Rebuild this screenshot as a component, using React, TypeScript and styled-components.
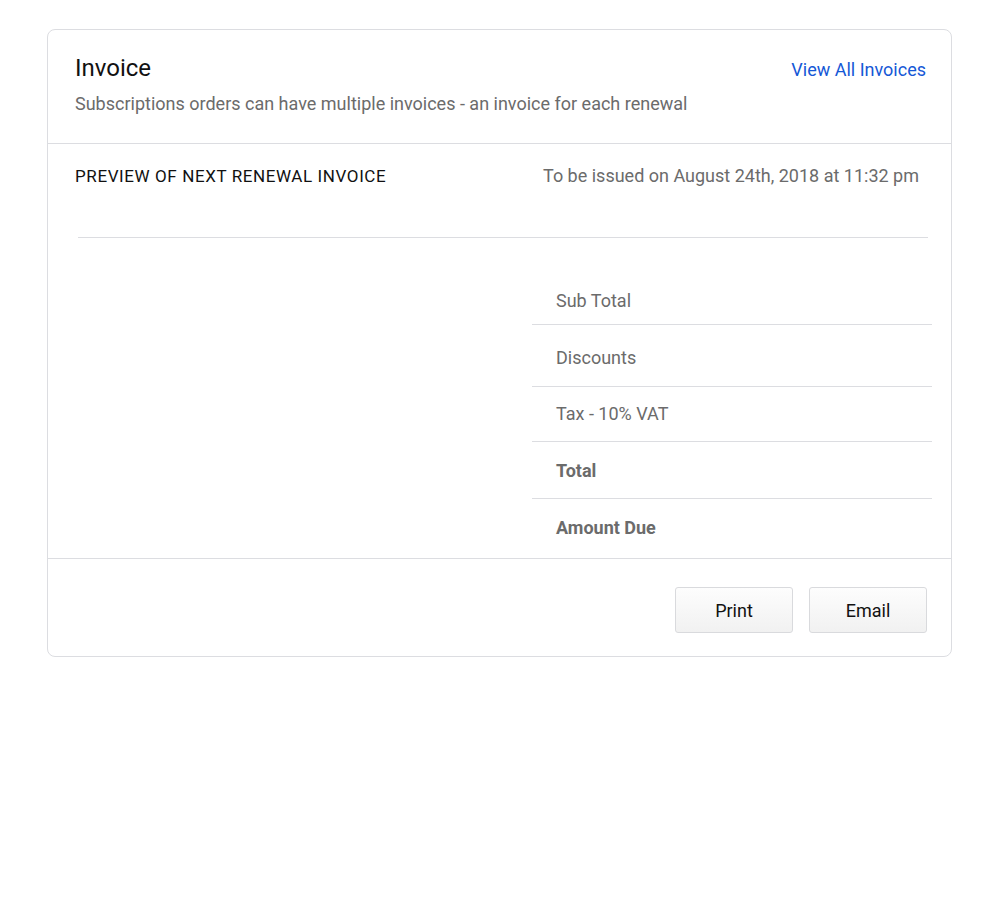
import { createGlobalStyle, styled } from 'styled-components'

const GlobalStyle = createGlobalStyle`
  body {
    margin: 0;
    background: #ffffff;
    font-family: Roboto, "Liberation Sans", Arial, sans-serif;
  }
  * {
    box-sizing: border-box;
  }
`

const Page = styled.div`
  padding: 29px 48px 0 47px;
`

const Card = styled.div`
  border: 1px solid #dcdde1;
  border-radius: 8px;
  background: #fff;
`

const Header = styled.div`
  display: flex;
  justify-content: space-between;
  align-items: flex-start;
  padding: 24px 25px 29px 27px;
  border-bottom: 1px solid #dcdde1;
`

const Title = styled.h1`
  margin: 0 0 11px;
  font-size: 24px;
  font-weight: 400;
  line-height: 28px;
  color: #111;
`

const Subtitle = styled.p`
  margin: 0;
  font-size: 18px;
  line-height: 21px;
  color: #6b6b6b;
`

const Link = styled.a`
  margin-top: 5px;
  font-size: 18px;
  line-height: 21px;
  color: #1558d6;
  text-decoration: none;
  cursor: pointer;
`

const PreviewRow = styled.div`
  display: flex;
  justify-content: space-between;
  padding: 21px 32px 50px 27px;
`

const PreviewLabel = styled.div`
  font-size: 17px;
  line-height: 22px;
  letter-spacing: 0.6px;
  color: #111;
`

const IssuedOn = styled.div`
  font-size: 18px;
  line-height: 22px;
  color: #6b6b6b;
`

const Divider = styled.hr`
  margin: 0 23px 0 30px;
  border: none;
  border-top: 1px solid #dcdde1;
`

const Totals = styled.div`
  display: flex;
  justify-content: flex-end;
  padding: 34px 19px 0 0;
  border-bottom: 1px solid #dcdde1;
`

const TotalsTable = styled.div`
  width: 400px;
`

const TotalsRow = styled.div<{ $bold?: boolean; $last?: boolean; $height: number; $top: number }>`
  height: ${p => p.$height}px;
  padding: ${p => p.$top}px 24px 0;
  font-size: 18px;
  line-height: 22px;
  color: #6b6b6b;
  font-weight: ${p => (p.$bold ? 700 : 400)};
  border-bottom: ${p => (p.$last ? 'none' : '1px solid #dcdde1')};
`

const Footer = styled.div`
  display: flex;
  justify-content: flex-end;
  gap: 16px;
  padding: 28px 24px 23px;
`

const Button = styled.button`
  width: 118px;
  height: 46px;
  border: 1px solid #d9dadd;
  border-radius: 3px;
  background: linear-gradient(#fdfdfd, #f1f1f1);
  font-family: inherit;
  font-size: 18px;
  color: #111;
  cursor: pointer;
`

const rows = [
  { label: 'Sub Total', height: 53, top: 18 },
  { label: 'Discounts', height: 62, top: 22 },
  { label: 'Tax - 10% VAT', height: 55, top: 16 },
  { label: 'Total', bold: true, height: 57, top: 18 },
  { label: 'Amount Due', bold: true, height: 59, top: 18 },
]

const App = () => (
  <Page>
    <GlobalStyle />
    <Card>
      <Header>
        <div>
          <Title>Invoice</Title>
          <Subtitle>Subscriptions orders can have multiple invoices - an invoice for each renewal</Subtitle>
        </div>
        <Link>View All Invoices</Link>
      </Header>

      <PreviewRow>
        <PreviewLabel>PREVIEW OF NEXT RENEWAL INVOICE</PreviewLabel>
        <IssuedOn>To be issued on August 24th, 2018 at 11:32 pm</IssuedOn>
      </PreviewRow>
      <Divider />

      <Totals>
        <TotalsTable>
          {rows.map((row, i) => (
            <TotalsRow
              key={row.label}
              $bold={row.bold}
              $last={i === rows.length - 1}
              $height={row.height}
              $top={row.top}
            >
              {row.label}
            </TotalsRow>
          ))}
        </TotalsTable>
      </Totals>

      <Footer>
        <Button>Print</Button>
        <Button>Email</Button>
      </Footer>
    </Card>
  </Page>
)

export default App
